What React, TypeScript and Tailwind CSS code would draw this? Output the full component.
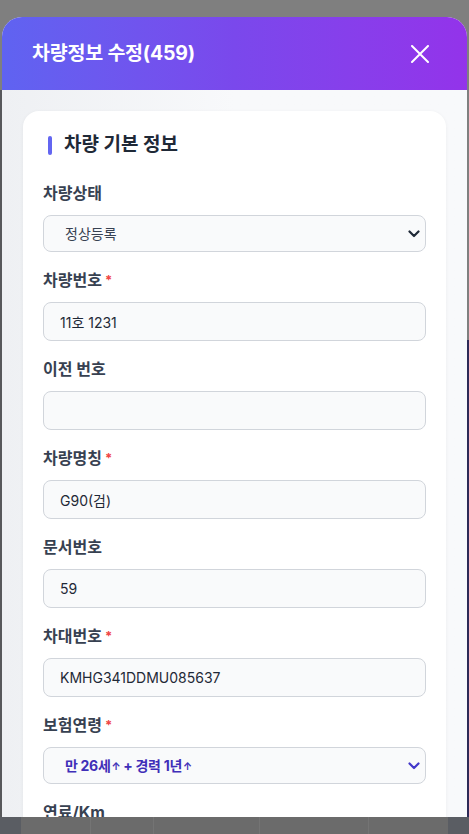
import React from "react";

const font = { fontFamily: '"Inter", "Noto Sans CJK KR", sans-serif' };

function Chevron({ color }: { color: string }) {
  return (
    <svg width="12" height="8" viewBox="0 0 12 8" fill="none" className="shrink-0">
      <path d="M1.5 1.5L6 6L10.5 1.5" stroke={color} strokeWidth="2.2" strokeLinecap="round" strokeLinejoin="round" />
    </svg>
  );
}

function Label({ text, required }: { text: string; required?: boolean }) {
  return (
    <div className="flex items-center gap-[3px] h-5 mb-3">
      <span className="text-[16px] leading-5 font-bold text-[#374151]">{text}</span>
      {required && <span className="text-[13px] leading-5 font-bold text-[#ef4444]">*</span>}
    </div>
  );
}

function TextField({ label, value, required }: { label: string; value: string; required?: boolean }) {
  return (
    <div>
      <Label text={label} required={required} />
      <input
        readOnly
        value={value}
        className="w-full h-[39px] rounded-lg border border-[#d1d5db] bg-[#f9fafb] px-4 text-[14px] text-[#1f2937] outline-none"
        style={font}
      />
    </div>
  );
}

function SelectField({
  label,
  required,
  accent,
  children,
}: {
  label: string;
  required?: boolean;
  accent?: boolean;
  children: React.ReactNode;
}) {
  return (
    <div>
      <Label text={label} required={required} />
      <button
        type="button"
        className="w-full flex items-center h-[37px] rounded-lg border border-[#d1d5db] bg-[#f9fafb] pl-[21px] pr-[5px] text-left"
      >
        <span
          className={
            "flex-1 text-[14px] " + (accent ? "font-bold text-[#3f2fb8] tracking-[-0.3px]" : "text-[#374151]")
          }
        >
          {children}
        </span>
        <Chevron color={accent ? "#4338ca" : "#1f2937"} />
      </button>
    </div>
  );
}

function Up() {
  return <span className="text-[10px] font-bold align-[1px] ml-[1px]">↑</span>;
}

export default function App() {
  return (
    <div className="relative w-[469px] h-[834px] overflow-hidden bg-[#7f7f7f]" style={font}>
      {/* page behind the overlay */}
      <div className="absolute left-0 top-[90px] w-[2px] h-[727px] bg-[#57585b]" />
      <div className="absolute right-0 top-[340px] w-[2px] h-[477px] bg-[#2d2a57]" />
      <div className="absolute bottom-0 inset-x-0 h-[17px] flex bg-[#5a5d63]">
        <div className="ml-[21px] w-[427px] h-full bg-[#6b6b6b] flex">
          <div className="w-[70px] border-r border-[#747474]" />
          <div className="w-[63px] border-r border-[#747474]" />
          <div className="w-[106px] border-r border-[#747474]" />
          <div className="w-[109px] border-r border-[#747474]" />
        </div>
      </div>

      {/* modal */}
      <div className="absolute left-[2px] top-[17px] w-[465px] h-[800px] rounded-t-[20px] overflow-hidden flex flex-col bg-[#f8f9fb]">
        <div className="h-[73px] shrink-0 flex items-center justify-between pl-[30px] pr-[38px] bg-gradient-to-r from-[#5f63f1] via-[#7a48ec] to-[#9333ea]">
          <h2 className="text-[19.5px] font-bold text-white tracking-[-0.2px]">차량정보 수정(459)</h2>
          <svg width="18" height="18" viewBox="0 0 18 18" fill="none">
            <path d="M1 1L17 17M17 1L1 17" stroke="white" strokeWidth="2" strokeLinecap="round" />
          </svg>
        </div>

        <div className="flex-1 overflow-hidden bg-gradient-to-r from-[#eef0f3] via-[#f8f9fb] to-[#f8f9fb] px-[21px] pt-[21px]">
          <div className="bg-white rounded-2xl shadow-[0_1px_4px_rgba(0,0,0,0.05)] px-5 pt-[22px] pb-6">
            <div className="flex items-center gap-3 pl-[5px] h-6 mb-[26px]">
              <span className="w-1 h-[19px] rounded-full bg-[#6366f1]" />
              <h3 className="text-[19px] leading-6 font-bold text-[#1f2937]">차량 기본 정보</h3>
            </div>

            <div className="flex flex-col gap-[18px]">
              <SelectField label="차량상태">정상등록</SelectField>
              <TextField label="차량번호" value="11호 1231" required />
              <TextField label="이전 번호" value="" />
              <TextField label="차량명칭" value="G90(검)" required />
              <TextField label="문서번호" value="59" />
              <TextField label="차대번호" value="KMHG341DDMU085637" required />
              <SelectField label="보험연령" required accent>
                만 26세<Up /> + 경력 1년<Up />
              </SelectField>
              <TextField label="연료/Km" value="" />
            </div>
          </div>
        </div>
      </div>
    </div>
  );
}
